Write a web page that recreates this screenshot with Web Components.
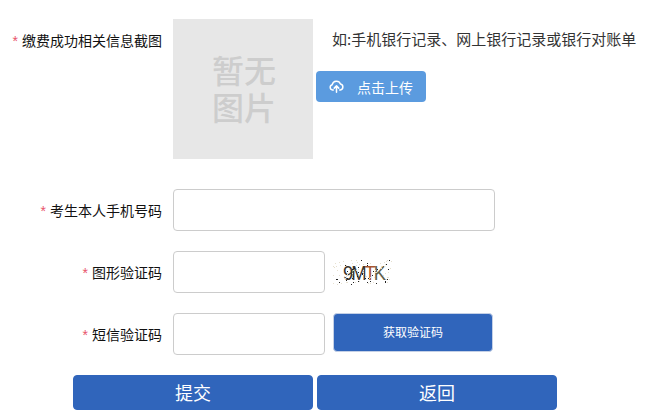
<!DOCTYPE html>
<html lang="zh">
<head>
<meta charset="utf-8">
<title>缴费信息</title>
<style>
  html, body { margin: 0; background: #fff; }
  body { font-family: "Noto Sans CJK SC", "Liberation Sans", sans-serif; color: #111; overflow: hidden; }
</style>
</head>
<body>
<pay-form></pay-form>

<script>
const FONT = '"Noto Sans CJK SC", "Liberation Sans", sans-serif';

class FormRow extends HTMLElement {
  constructor() {
    super();
    this.attachShadow({ mode: 'open' });
    this.shadowRoot.innerHTML = `
      <style>
        :host { display: grid; grid-template-columns: 162px 1fr; column-gap: 11px; }
        .label { font-size: 14px; line-height: 20px; text-align: right; white-space: nowrap; padding-top: 11px; color: #111; }
        .star { color: #e8536b; margin-right: 4px; font-family: "Liberation Sans", sans-serif; }
        .body { display: flex; align-items: flex-start; min-width: 0; }
      </style>
      <div class="label"><span class="star">*</span><slot name="label"></slot></div>
      <div class="body"><slot></slot></div>
    `;
  }
}

class TextBox extends HTMLElement {
  constructor() {
    super();
    this.attachShadow({ mode: 'open' });
    this.shadowRoot.innerHTML = `
      <style>
        :host { display: block; width: var(--box-width, 152px); height: 42px; }
        input { display: block; width: 100%; height: 100%; box-sizing: border-box; border: 1px solid #ccc; border-radius: 4px; background: #fff; padding: 0 10px; font: 14px ${FONT}; outline: none; }
      </style>
      <input type="text">
    `;
  }
}

class PhotoEmpty extends HTMLElement {
  constructor() {
    super();
    this.attachShadow({ mode: 'open' });
    this.shadowRoot.innerHTML = `
      <style>
        :host { display: flex; flex: none; width: 140px; height: 140px; align-items: center; justify-content: center; background: #e7e7e7; }
        span { color: #cdcdcd; font-size: 32px; font-weight: 500; line-height: 37px; width: 66px; margin: 0 0 3px 2px; text-align: center; font-family: ${FONT}; }
      </style>
      <span>暂无图片</span>
    `;
  }
}

class UploadBlock extends HTMLElement {
  constructor() {
    super();
    this.attachShadow({ mode: 'open' });
    this.shadowRoot.innerHTML = `
      <style>
        :host { display: flex; flex-direction: column; align-items: flex-start; margin-left: 3px; }
        .hint { font-size: 15px; line-height: 20px; margin: 10px 0 0 16px; white-space: nowrap; color: #333; }
        button { display: flex; align-items: center; margin-top: 22px; width: 110px; height: 31px; padding: 0 0 0 13px; border: 0; border-radius: 4px; background: #5b9bdf; color: #fff; font: 14px ${FONT}; }
        svg { width: 15px; height: 13px; margin-right: 13px; flex: none; }
      </style>
      <div class="hint">如:手机银行记录、网上银行记录或银行对账单</div>
      <button type="button">
        <svg viewBox="0 0 14 12" fill="none" stroke="#fff" stroke-width="1.4" stroke-linecap="round" stroke-linejoin="round">
          <path d="M4 9.2H3.3A2.5 2.5 0 0 1 3 4.3 4 4 0 0 1 10.7 3.7 2.8 2.8 0 0 1 10.6 9.2H10"/>
          <path d="M7 11.3V5.6M4.9 7.5 7 5.4 9.1 7.5"/>
        </svg>
        点击上传
      </button>
    `;
  }
}

class CaptchaPic extends HTMLElement {
  constructor() {
    super();
    this.attachShadow({ mode: 'open' });
    // fixed speckle so every run gives the same picture
    let dots = '';
    let seed = 7;
    const rnd = () => (seed = (seed * 16807) % 2147483647) / 2147483647;
    for (let i = 0; i < 110; i++) {
      const x = Math.floor(rnd() * 59), y = Math.floor(rnd() * 25);
      const c = rnd() > 0.7 ? '#222' : '#e6e0cf';
      dots += `<rect x="${x}" y="${y}" width="1" height="1" fill="${c}"/>`;
    }
    this.shadowRoot.innerHTML = `
      <style>
        :host { display: block; position: relative; width: 60px; height: 26px; margin: 9px 0 0 8px; flex: none; }
        svg { position: absolute; inset: 0; width: 60px; height: 26px; }
        .code { position: absolute; left: 10px; top: 0; font: 21px/26px "Liberation Sans", sans-serif; letter-spacing: -2.4px; transform: scaleX(.88); transform-origin: left center; color: #3a352b; white-space: nowrap; }
        .t { color: #a8552f; }
        .k { color: #5f5e4a; }
      </style>
      <div class="code">9M<span class="t">T</span><span class="k">K</span></div>
      <svg viewBox="0 0 60 26">${dots}</svg>
    `;
  }
}

class BlueButton extends HTMLElement {
  constructor() {
    super();
    this.attachShadow({ mode: 'open' });
    this.shadowRoot.innerHTML = `
      <style>
        :host { display: block; flex: none; }
        button { display: block; width: 100%; height: 100%; padding: 0 0 2px; border: 1px solid var(--btn-border, #3065bb); border-radius: 4px; background: #3065bb; color: #fff; font: var(--btn-size, 18px) ${FONT}; }
      </style>
      <button type="button"><slot></slot></button>
    `;
  }
}

class PayForm extends HTMLElement {
  constructor() {
    super();
    this.attachShadow({ mode: 'open' });
    this.shadowRoot.innerHTML = `
      <style>
        :host { display: flex; flex-direction: column; padding-top: 19px; gap: 20px; }
        .first { margin-bottom: 10px; }
        .phone { --box-width: 322px; }
        .sms { width: 160px; height: 39px; margin: 0 0 0 8px; --btn-size: 12px; --btn-border: #c4d0e6; }
        .actions { display: flex; gap: 4px; padding-left: 73px; }
        .actions blue-button { width: 240px; height: 35px; }
      </style>
      <form-row class="first">
        <span slot="label">缴费成功相关信息截图</span>
        <photo-empty></photo-empty>
        <upload-block></upload-block>
      </form-row>
      <form-row class="phone">
        <span slot="label">考生本人手机号码</span>
        <text-box></text-box>
      </form-row>
      <form-row>
        <span slot="label">图形验证码</span>
        <text-box></text-box>
        <captcha-pic></captcha-pic>
      </form-row>
      <form-row>
        <span slot="label">短信验证码</span>
        <text-box></text-box>
        <blue-button class="sms">获取验证码</blue-button>
      </form-row>
      <div class="actions">
        <blue-button>提交</blue-button>
        <blue-button>返回</blue-button>
      </div>
    `;
  }
}

customElements.define('form-row', FormRow);
customElements.define('text-box', TextBox);
customElements.define('photo-empty', PhotoEmpty);
customElements.define('upload-block', UploadBlock);
customElements.define('captcha-pic', CaptchaPic);
customElements.define('blue-button', BlueButton);
customElements.define('pay-form', PayForm);
</script>
</body>
</html>
